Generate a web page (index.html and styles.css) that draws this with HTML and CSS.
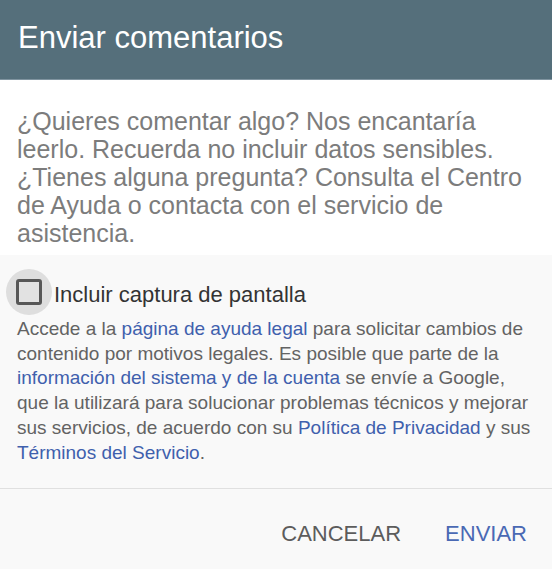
FILE: index.html
```html
<!DOCTYPE html>
<html lang="es">
<head>
<meta charset="utf-8">
<title>Enviar comentarios</title>
<link rel="stylesheet" href="styles.css">
</head>
<body>
<div class="dialog">
  <header class="header">
    <h1 class="title">Enviar comentarios</h1>
  </header>
  <section class="intro">
    <p class="intro-text">¿Quieres comentar algo? Nos encantaría leerlo. Recuerda no incluir datos sensibles. ¿Tienes alguna pregunta? Consulta el Centro de Ayuda o contacta con el servicio de asistencia.</p>
  </section>
  <section class="options">
    <div class="check-row">
      <span class="ripple"><span class="box"></span></span>
      <span class="check-label">Incluir captura de pantalla</span>
    </div>
    <p class="legal">Accede a la <a class="link" href="#">página de ayuda legal</a> para solicitar cambios de contenido por motivos legales. Es posible que parte de la <a class="link" href="#">información del sistema y de la cuenta</a> se envíe a Google, que la utilizará para solucionar problemas técnicos y mejorar sus servicios, de acuerdo con su <a class="link" href="#">Política de Privacidad</a> y sus <a class="link" href="#">Términos del Servicio</a>.</p>
  </section>
  <footer class="footer">
    <span class="btn btn-cancel">CANCELAR</span>
    <span class="btn btn-send">ENVIAR</span>
  </footer>
</div>
</body>
</html>
```
FILE: styles.css
```css
html, body {
  margin: 0;
  padding: 0;
}
body {
  font-family: "Liberation Sans", Arial, sans-serif;
  background: #f9f9f9;
  width: 552px;
  height: 569px;
  overflow: hidden;
}
.dialog {
  display: flex;
  flex-direction: column;
  height: 569px;
}
.header {
  height: 80px;
  box-sizing: border-box;
  background: #556f7b;
  padding: 20px 0 0 18px;
  border-bottom: 1px solid #8094a0;
}
.title {
  margin: 0;
  font-weight: normal;
  font-size: 31px;
  line-height: 36px;
  color: #ffffff;
}
.intro {
  background: #ffffff;
  padding: 27px 17px 8px 17px;
}
.intro-text {
  margin: 0;
  font-size: 25px;
  line-height: 28px;
  color: #7c7c7c;
}
.options {
  background: #f9f9f9;
  padding: 14px 20px 23px 0;
  border-bottom: 1px solid #e0e0e0;
}
.check-row {
  display: flex;
  align-items: center;
}
.ripple {
  flex: 0 0 46px;
  width: 46px;
  height: 46px;
  margin-left: 6px;
  border-radius: 50%;
  background: #dedede;
  display: flex;
  align-items: center;
  justify-content: center;
}
.box {
  width: 26px;
  height: 26px;
  box-sizing: border-box;
  border: 3px solid #575757;
  border-radius: 3px;
  background: #e2e2e2;
}
.check-label {
  margin: 5px 0 0 2px;
  font-size: 22px;
  line-height: 26px;
  color: #333333;
}
.legal {
  margin: 2px 0 0 17px;
  font-size: 19px;
  line-height: 24.7px;
  color: #636363;
}
.link {
  color: #3f60ad;
  text-decoration: none;
}
.footer {
  flex: 1;
  display: flex;
  justify-content: flex-end;
  gap: 44px;
  padding: 32px 25px 0 0;
}
.btn {
  font-size: 22px;
  line-height: 26px;
}
.btn-cancel {
  color: #5c5c5c;
}
.btn-send {
  color: #4a69b4;
}
```
